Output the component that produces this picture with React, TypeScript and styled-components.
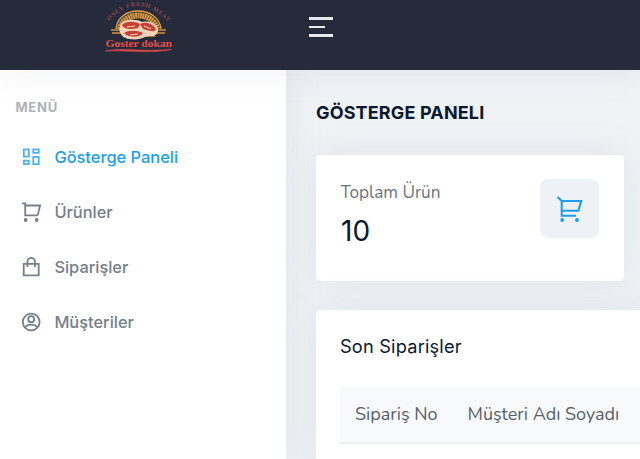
import React from "react";
import styled, { createGlobalStyle } from "styled-components";

const GlobalStyle = createGlobalStyle`
  * { box-sizing: border-box; }
  body { margin: 0; overflow: hidden; background: #eff3f6; font-family: Inter, sans-serif; }
  h1, h2, p { margin: 0; }
`;

const Page = styled.div`
  width: 100vw;
  height: 100vh;
  overflow: hidden;
  display: flex;
  flex-direction: column;
`;

const Header = styled.header`
  flex: 0 0 70px;
  display: flex;
  align-items: flex-start;
  background: #252b3b;
  box-shadow: 0 0 35px rgba(140, 152, 164, 0.15);
  z-index: 2;
`;

const Brand = styled.div`
  width: 286px;
  padding-left: 103px;
  svg { display: block; }
`;

const MenuButton = styled.button`
  display: flex;
  flex-direction: column;
  gap: 6px;
  margin: 17px 0 0 23px;
  padding: 0;
  border: 0;
  background: none;
`;

const MenuBar = styled.span<{ $short?: boolean }>`
  width: ${(p) => (p.$short ? 16 : 24)}px;
  height: 2.7px;
  background: #e6eaee;
`;

const Body = styled.div`
  flex: 1;
  display: flex;
  min-height: 0;
`;

const Sidebar = styled.nav`
  flex: 0 0 286px;
  padding-top: 28px;
  background: #fff;
  box-shadow: 0 0 35px rgba(140, 152, 164, 0.16);
`;

const MenuTitle = styled.p`
  padding-left: 15.5px;
  height: 32px;
  font-size: 13px;
  line-height: 18px;
  font-weight: 700;
  letter-spacing: 0.75px;
  color: #adb2b7;
`;

const MenuItem = styled.a<{ $active?: boolean }>`
  display: flex;
  align-items: center;
  gap: 13.4px;
  height: 54.9px;
  padding-left: 21px;
  font-size: 16.4px;
  font-weight: 500;
  color: ${(p) => (p.$active ? "#1a9ff5" : "#74808b")};
  svg { opacity: ${(p) => (p.$active ? 0.8 : 1)}; }
`;

const Main = styled.main`
  flex: 1;
  min-width: 0;
  padding: 31px 16px 0 30px;
`;

const Title = styled.h1`
  height: 54px;
  font-size: 18px;
  line-height: 24px;
  font-weight: 700;
  letter-spacing: 0.15px;
  color: #0a1832;
`;

const Card = styled.section`
  background: #fff;
  border-radius: 5px;
  box-shadow: 0 0 35px rgba(140, 152, 164, 0.15);
`;

const StatCard = styled(Card)`
  display: flex;
  justify-content: space-between;
  height: 126px;
  padding: 24px 25px;
`;

const StatLabel = styled.p`
  margin-left: -0.5px;
  font-family: Nunito, "Noto Sans", sans-serif;
  font-size: 17.2px;
  line-height: 27px;
  color: #68757b;
`;

const StatValue = styled.p`
  margin-top: 8px;
  font-size: 28px;
  line-height: 35px;
  color: #0a1832;
`;

const IconTile = styled.div`
  display: grid;
  place-items: center;
  width: 59px;
  height: 59px;
  border-radius: 8px;
  background: #eef2f7;
`;

const OrdersCard = styled(Card)`
  width: 700px;
  height: 200px;
  margin-top: 29px;
  padding: 24px;
`;

const CardTitle = styled.h2`
  height: 53px;
  font-size: 18.2px;
  line-height: 25px;
  font-weight: 400;
  letter-spacing: 0.2px;
  color: #0a1832;
`;

const TableHead = styled.div`
  display: flex;
  align-items: center;
  gap: 30px;
  height: 57px;
  padding: 0 0 2px 15px;
  border-bottom: 2px solid #edf1f5;
  background: #f8f9fb;
  white-space: nowrap;
`;

const HeadCell = styled.span`
  font-family: Nunito, "Noto Sans", sans-serif;
  font-size: 18px;
  color: #566268;
`;

const Stroke = styled.svg.attrs({ viewBox: "0 0 20 20", width: 20, height: 20 })`
  flex: none;
  overflow: visible;
  fill: none;
  stroke: currentColor;
  stroke-width: 1.8;
`;

const Logo = () => (
  <svg width="72" height="56" viewBox="0 0 72 56">
    <defs>
      <path id="arc" d="M6 21 Q35 -10 66 23" />
    </defs>
    <text fontFamily="Liberation Serif" fontSize="6" fontWeight="700" fill="#964548" letterSpacing="0.8">
      <textPath href="#arc">ONLY FRESH MEAT</textPath>
    </text>
    <path d="M13 29C15 5 55 5 58 29" fill="none" stroke="#e9a343" strokeWidth="1.3" />
    <path d="M17 29C20 11 50 11 54 29" fill="none" stroke="#dc9a3e" strokeWidth="6" strokeDasharray="1.9 .5" />
    <path d="M8 30h17M9 33h18M49 30h14M49 33h13M20 36h32" stroke="#d98f38" strokeWidth="1.3" />
    <path d="M17 26C18 19 33 18 39 22C49 20 56 26 55 31C54 38 46 35 42 37C35 41 20 40 18 34C16 31 16 29 17 26Z" fill="#f5d5ba" />
    <g fill="#c84035">
      <path d="M19 25C22 21 32 21 37 24L35 28C28 30 20 29 19 25Z" />
      <path d="M37 24C43 21 50 24 53 29C52 33 46 31 40 29Z" />
      <path d="M21 33C25 30 34 30 40 33C37 38 25 38 21 33Z" />
    </g>
    <path d="M24 27l8-1M41 26l7 3M27 35l8-1" stroke="#f5d5ba" strokeWidth="1" />
    <text x="2.5" y="46.5" fontFamily="Liberation Serif" fontSize="11" fontWeight="700" fill="#e44d4d" textLength="66.5" lengthAdjust="spacingAndGlyphs">Goster dokan</text>
    <path d="M2 51C20 47 40 52 69 49.3C51 54 25 50 2 51Z" fill="#d9474c" stroke="#d9474c" strokeWidth=".6" />
  </svg>
);

const DashboardIcon = () => (
  <Stroke>
    <path d="M2.8 2.3h5v7.4h-5zM12.3 2.3h5.4v3.6h-5.4zM2.8 13.6h5v3.6h-5zM12.3 9.8h5.4v7.4h-5.4z" />
  </Stroke>
);

const CartIcon = () => (
  <Stroke>
    <path d="M1 1.3h3.2v12h12.5M4.2 3.5h14.9l-2.4 9.8" />
    <circle cx="4.7" cy="18" r="1.9" fill="currentColor" stroke="none" />
    <circle cx="15.7" cy="18" r="1.9" fill="currentColor" stroke="none" />
  </Stroke>
);

const BagIcon = () => (
  <Stroke>
    <path d="M2.7 6.9h15v11.4h-15zM6.5 10V4.6a3.7 3.7 0 0 1 7.4 0V10" />
  </Stroke>
);

const UserIcon = () => (
  <Stroke>
    <circle cx="10.2" cy="10" r="8.4" />
    <circle cx="10.2" cy="7.2" r="3" />
    <path d="M4 15.3c2.8-3.6 9.6-3.6 12.4 0" />
  </Stroke>
);

const TileCartIcon = () => (
  <svg width="30" height="30" viewBox="0 0 30 30" fill="none" stroke="#1d9df3" strokeWidth="2.1">
    <path d="M2.5 3l4.2 4v14.7h14.3M6.7 7h19.5l-2.8 9.7H6.7" />
    <circle cx="7.2" cy="26" r="1.9" fill="#1d9df3" stroke="none" />
    <circle cx="22" cy="26" r="1.9" fill="#1d9df3" stroke="none" />
  </svg>
);

export default function App() {
  return (
    <Page>
      <GlobalStyle />
      <Header>
        <Brand><Logo /></Brand>
        <MenuButton aria-label="Menü">
          <MenuBar />
          <MenuBar $short />
          <MenuBar />
        </MenuButton>
      </Header>
      <Body>
        <Sidebar>
          <MenuTitle>MENÜ</MenuTitle>
          <MenuItem $active><DashboardIcon />Gösterge Paneli</MenuItem>
          <MenuItem><CartIcon />Ürünler</MenuItem>
          <MenuItem><BagIcon />Siparişler</MenuItem>
          <MenuItem><UserIcon />Müşteriler</MenuItem>
        </Sidebar>
        <Main>
          <Title>GÖSTERGE PANELI</Title>
          <StatCard>
            <div>
              <StatLabel>Toplam Ürün</StatLabel>
              <StatValue>10</StatValue>
            </div>
            <IconTile><TileCartIcon /></IconTile>
          </StatCard>
          <OrdersCard>
            <CardTitle>Son Siparişler</CardTitle>
            <TableHead>
              <HeadCell>Sipariş No</HeadCell>
              <HeadCell>Müşteri Adı Soyadı</HeadCell>
            </TableHead>
          </OrdersCard>
        </Main>
      </Body>
    </Page>
  );
}
